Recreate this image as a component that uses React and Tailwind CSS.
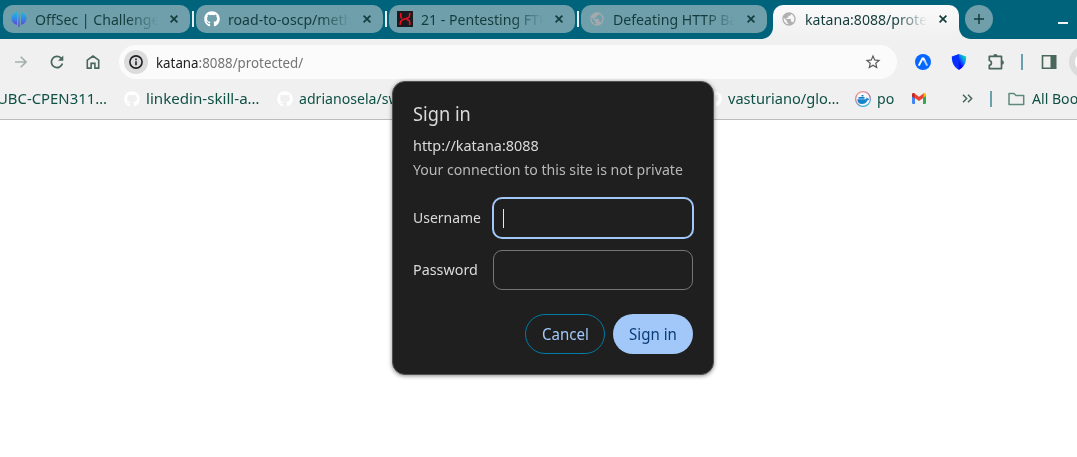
import React from "react";
import { FaGithub } from "react-icons/fa";
import { MdStarBorder, MdPublic } from "react-icons/md";

/* Single line of text, condensed horizontally; `w` fits it to a width in px. */
function T({ children, w, className = "" }) {
  const ref = React.useRef(null);
  const [scale, setScale] = React.useState(0.94);
  React.useLayoutEffect(() => {
    if (w && ref.current) setScale(w / ref.current.offsetWidth);
  }, [w]);
  return (
    <span
      ref={ref}
      className={"inline-block shrink-0 origin-left whitespace-nowrap " + className}
      style={{ transform: `scaleX(${scale})` }}
    >
      {children}
    </span>
  );
}

function OffSecIcon() {
  return (
    <svg className="h-4 w-4 shrink-0" viewBox="0 0 16 16">
      <defs>
        <linearGradient id="os" gradientUnits="userSpaceOnUse" x1="8" y1="0" x2="8" y2="16">
          <stop offset="0" stopColor="#19c4e0" />
          <stop offset="0.5" stopColor="#3585e4" />
          <stop offset="1" stopColor="#6a35d6" />
        </linearGradient>
      </defs>
      <g fill="url(#os)">
        <path d="M6 .8v13.200L5 13.600C2.500 12.500 .5 10.800 .5 7.500S3 1.700 6 .8z" />
        <path d="M10 .8v13.200l1-.4c2.500-1.100 4.500-2.800 4.500-6.100S13 1.700 10 .8z" />
        <path d="M7.300 3.500h1.400v12.200H7.300z" />
      </g>
    </svg>
  );
}

function RedIcon() {
  return (
    <svg className="h-4 w-4 shrink-0" viewBox="0 0 16 16">
      <path fill="#191b20" d="M0 0h16v16H0z" />
      <path
        d="M3.800 2v3.500q0 1.500 1.500 1.700M12.800 2l-.3 3q-.2 1.600-1.800 2L6.300 8.500Q4 9 3.600 11L3 13.800M9.700 8.600l1.500.3q1.500.4 1.500 2V14"
        fill="none"
        stroke="#ee1020"
        strokeWidth="1.600"
      />
    </svg>
  );
}

function Close({ className = "" }) {
  return (
    <svg className={"h-2 w-2 shrink-0 " + className} viewBox="0 0 8 8">
      <path d="M.6.6l6.800 6.800M7.400.6L.6 7.400" stroke="currentColor" strokeWidth="1.700" />
    </svg>
  );
}

function Tab({ icon, title, className, titleClass, active }) {
  return (
    <div
      className={
        "flex shrink-0 items-center text-[#143c3c] " +
        (active ? "h-[34px] rounded-t-[10px] bg-gradient-to-b from-[#fafafa] to-[#f0f0f0] pb-[6px] " : "h-7 rounded-[10px] bg-[#6f9fab] ") +
        className
      }
    >
      {icon}
      <div
        className={
          "flex h-7 shrink-0 items-center overflow-hidden pb-px [mask-image:linear-gradient(to_right,black_75%,transparent)] " +
          titleClass
        }
      >
        <T>{title}</T>
      </div>
      <Close className="ml-auto mr-3" />
    </div>
  );
}

function Gap() {
  return (
    <div className="flex h-7 w-[6px] shrink-0 items-center justify-center">
      <div className="h-4 w-[2px] bg-[#e8eef0]" />
    </div>
  );
}

function Flare({ flip }) {
  return (
    <svg
      className={flip ? "absolute bottom-0 left-full h-3 w-3 -scale-x-100" : "absolute bottom-0 right-full h-3 w-3"}
      viewBox="0 0 12 12"
    >
      <path d="M12 0v12H0C7 12 12 7 12 0z" fill="#f0f0f0" />
    </svg>
  );
}

const globe = "h-4 w-4 shrink-0";

export default function App() {
  return (
    <div className="relative h-[457px] w-[1077px] overflow-hidden bg-white font-['Noto_Sans',sans-serif] text-[15px] leading-6">
      <div className="flex h-[39px] items-start bg-[#00637c] pl-[3px] pt-[5px]">
        <Tab className="w-[187px] pl-2" icon={<OffSecIcon />} title="OffSec | Challenge" titleClass="ml-2 w-[123px]" />
        <Gap />
        <Tab className="w-[187px] pl-2" icon={<FaGithub className="h-4 w-4 shrink-0 text-white" />} title="road-to-oscp/meth" titleClass="ml-2 w-[123px]" />
        <Gap />
        <Tab className="w-[186px] pl-2" icon={<RedIcon />} title="21 - Pentesting FTP" titleClass="ml-2 w-[122px]" />
        <Gap />
        <Tab className="w-[186px] pl-2" icon={<MdPublic className={globe + " text-[#a3a9ac]"} />} title="Defeating HTTP Ba" titleClass="ml-2 w-[122px]" />
        <div className="w-[6px] shrink-0" />
        <div className="relative shrink-0">
          <Flare />
          <Tab active className="w-[186px] pl-2" icon={<MdPublic className={globe + " text-[#b0b0b0]"} />} title="katana:8088/prote" titleClass="ml-2 w-[122px]" />
          <Flare flip />
        </div>
        <div className="ml-[6px] flex h-7 w-7 shrink-0 items-center justify-center rounded-full bg-[#6f9fab]">
          <svg className="h-[10px] w-[10px]" viewBox="0 0 10 10">
            <path d="M5 0v10M0 5h10" stroke="#143c3c" strokeWidth="1.500" />
          </svg>
        </div>
        <div className="ml-[65px] mt-[17px] h-[2px] w-[10px] shrink-0 bg-[#f0f4f5]" />
      </div>

      <div className="h-[81px] border-b border-[#bcbcbc] bg-[#f0f0f0]">
        <div className="flex h-[46px] items-center text-[#4a675c]">
          <svg className="ml-[15px] h-3 w-3 shrink-0" viewBox="0 0 12 12">
            <path d="M0 6h10.500M5.700 .7L11 6l-5.300 5.300" fill="none" stroke="#a3b0aa" strokeWidth="1.600" />
          </svg>
          <svg className="ml-[22px] h-4 w-4 shrink-0" viewBox="0 0 16 16">
            <path d="M13.400 9.500A5.600 5.600 0 1 1 12 4.100L13.500 5.700" fill="none" stroke="currentColor" strokeWidth="1.700" />
            <path d="M14.300 1.500v5.200H9z" fill="currentColor" />
          </svg>
          <svg className="ml-5 h-4 w-4 shrink-0" viewBox="0 0 16 16">
            <path d="M2.300 14.100V6.200L8 2l5.700 4.200v7.900H9.900V9.400H6.100v4.700z" fill="none" stroke="currentColor" strokeWidth="1.600" />
          </svg>
          <div className="ml-[18px] flex h-[34px] w-[778px] shrink-0 items-center rounded-full bg-[#fbfbfb] pl-[5px]">
            <div className="flex h-6 w-6 shrink-0 items-center justify-center rounded-full bg-[#dcdcdc] text-[#202124]">
              <svg className="h-[14px] w-[14px]" viewBox="0 0 14 14">
                <circle cx="7" cy="7" r="6.100" fill="none" stroke="currentColor" strokeWidth="1.600" />
                <path d="M6.200 6.300h1.600v4H6.200zM6.200 3.600h1.600v1.600H6.200z" fill="currentColor" />
              </svg>
            </div>
            <div className="ml-2 w-[170px] pt-px text-[14px] text-[#747474]">
              <T w={147.500}>
                <span className="text-[#202020]">katana</span>:8088/protected/
              </T>
            </div>
            <MdStarBorder className="ml-auto mr-[15px] h-[18px] w-[18px] shrink-0 text-[#5a5a5a]" />
          </div>
          <svg className="ml-[18px] h-4 w-4 shrink-0" viewBox="0 0 16 16">
            <circle cx="8" cy="8" r="8" fill="#0667ff" />
            <path d="M3.800 11.600L7.400 4.600h1.200l1.500 3" fill="none" stroke="white" strokeWidth="2" />
            <path d="M9.300 6l2.900 5.600" stroke="#b9d6ff" strokeWidth="2" />
          </svg>
          <svg className="ml-5 h-4 w-4 shrink-0" viewBox="0 0 16 16">
            <defs>
              <linearGradient id="sh" x1="0.900" y1="0" x2="0.300" y2="0.800">
                <stop offset="0" stopColor="#00ff90" />
                <stop offset="0.500" stopColor="#1090f0" />
                <stop offset="1" stopColor="#0500ff" />
              </linearGradient>
            </defs>
            <path d="M8 0L.8 2.500C.8 9 2.800 13 8 16z" fill="#0531ff" />
            <path d="M7.900 0l7.300 2.500C15.200 9 13.200 13 7.900 16z" fill="url(#sh)" />
          </svg>
          <svg className="ml-5 h-[18px] w-[18px] shrink-0" viewBox="0 0 18 18">
            <path
              d="M2.300 3.400H14.500V15.600H2.300V12.300C5.100 11.800 5.100 8 2.300 7.500z"
              fill="none" stroke="currentColor" strokeWidth="1.700" strokeLinejoin="round"
            />
            <path d="M6.200 3.200a2.200 2.200 0 0 1 4.400 0zM14.700 7.300a2.200 2.200 0 0 1 0 4.400z" fill="currentColor" />
          </svg>
          <div className="ml-4 h-4 w-[2px] shrink-0 bg-[#6aa0ae]" />
          <svg className="ml-[18px] h-4 w-4 shrink-0" viewBox="0 0 16 16">
            <path d="M1.500 1.800h13v12.400h-13z" fill="none" stroke="currentColor" strokeWidth="1.600" />
            <path d="M9.500 1h5.800v14H9.500z" fill="currentColor" />
          </svg>
          <div className="ml-3 flex h-8 w-8 shrink-0 items-center justify-center rounded-full bg-[#dcdcdc]">
            <div className="h-5 w-5 rounded-full bg-white" />
          </div>
        </div>

        <div className="flex h-[27px] items-center text-[#0f5044]">
          <div className="-ml-[3px] w-[127px] shrink-0 pb-[2px]"><T w={110}>UBC-CPEN311…</T></div>
          <FaGithub className="h-4 w-4 shrink-0 text-white" />
          <div className="ml-[6px] w-[131px] shrink-0 pb-[2px]"><T w={114}>linkedin-skill-a…</T></div>
          <FaGithub className="h-4 w-4 shrink-0 text-white" />
          <div className="ml-[6px] w-[407px] shrink-0 pb-[2px]"><T>adrianosela/swa…</T></div>
          <FaGithub className="h-4 w-4 shrink-0 text-white" />
          <div className="ml-[6px] w-[127px] shrink-0 pb-[2px]"><T w={111}>vasturiano/glo…</T></div>
          <svg className="h-4 w-4 shrink-0" viewBox="0 0 16 16">
            <defs>
              <linearGradient id="dk" x1="0.200" y1="0" x2="0.600" y2="1">
                <stop offset="0" stopColor="#f59b98" />
                <stop offset="0.500" stopColor="#b478a8" />
                <stop offset="1" stopColor="#34b5e5" />
              </linearGradient>
            </defs>
            <circle cx="8" cy="8" r="7.400" fill="#f8f8f8" stroke="url(#dk)" strokeWidth="1.200" />
            <path d="M2.300 8.300h8.700l.8-2 1.200 1.500h1.500c-.5 1.200-1.300 1.700-2.200 1.700C11.500 12 9.500 13 7 13c-3.200 0-4.700-1.700-4.700-4.700zM3.500 6h6v1.700h-6zM6.500 4h2v1.500h-2z" fill="#1684ca" />
          </svg>
          <div className="ml-[6px] w-[35px] shrink-0 pb-[2px]"><T w={17}>po</T></div>
          <svg className="h-[11px] w-[14px] shrink-0" viewBox="0 0 14 11">
            <path d="M0 2v8q0 1 1 1h2V4.500z" fill="#4285f4" />
            <path d="M14 2v8q0 1-1 1h-2V4.500z" fill="#34a853" />
            <path d="M11 0v4.500l3-1.500V1.500Q14 0 12.500 0z" fill="#fbbc04" />
            <path d="M0 1.500v2l3 2V.500Q0-.800 0 1.500z" fill="#c5221f" />
            <path d="M2.500 .500L7 3.800 11.500 .500V4.700L7 8 2.500 4.700z" fill="#ea4335" />
          </svg>
          <svg className="ml-9 h-[9px] w-[11px] shrink-0" viewBox="0 0 11 9">
            <path d="M1 .700l3.700 3.800L1 8.300M6 .700l3.700 3.800L6 8.300" fill="none" stroke="#4a675c" strokeWidth="1.500" />
          </svg>
          <div className="ml-[17px] h-4 w-[2px] shrink-0 bg-[#6aa0ae]" />
          <svg className="ml-4 h-[14px] w-[17px] shrink-0" viewBox="0 0 17 14">
            <path d="M1 1.500h5l2 2h7.700v9H1z" fill="none" stroke="#5c8a7e" strokeWidth="1.500" strokeLinejoin="round" />
          </svg>
          <div className="ml-[7px] shrink-0 pb-[2px]"><T>All Bookmarks</T></div>
        </div>
      </div>

      <div className="absolute left-[392px] top-[81px] h-[294px] w-[322px] rounded-[13px] border border-[#505050] bg-[#1f1f1f] pl-5 pr-5 pt-[18px] text-[#dadada] shadow-[0_1px_4px_rgba(0,0,0,0.45)]">
        <div className="flex h-7 items-center text-[19px]"><T w={57.500}>Sign in</T></div>
        <div className="mt-[5px] flex h-6 items-center"><T w={126}>http://katana:8088</T></div>
        <div className="flex h-6 items-center text-[#b8b8b8]"><T w={270}>Your connection to this site is not private</T></div>
        <div className="mt-4 flex h-[42px] items-center">
          <div className="w-[79px] shrink-0 pb-[2px]"><T w={68}>Username</T></div>
          <div className="-mr-px flex h-[42px] w-[202px] shrink-0 items-center rounded-[10px] border-2 border-[#a1c8f8] pl-[9px]">
            <div className="h-[19px] w-px bg-[#e8e8e8]" />
          </div>
        </div>
        <div className="mt-[11px] flex h-10 items-center">
          <div className="w-20 shrink-0 pb-[2px]"><T w={65}>Password</T></div>
          <div className="h-10 w-[200px] shrink-0 rounded-[9px] border border-[#757575]" />
        </div>
        <div className="mt-6 flex justify-end gap-2 text-[16px]">
          <div className="flex h-10 w-20 items-center rounded-full border border-[#007ba5] pl-4 text-[#a1c8f8]"><T w={47}>Cancel</T></div>
          <div className="flex h-10 w-20 items-center rounded-full bg-[#a1c8f8] pl-4 text-[#0b3c78]"><T w={48}>Sign in</T></div>
        </div>
      </div>
    </div>
  );
}
